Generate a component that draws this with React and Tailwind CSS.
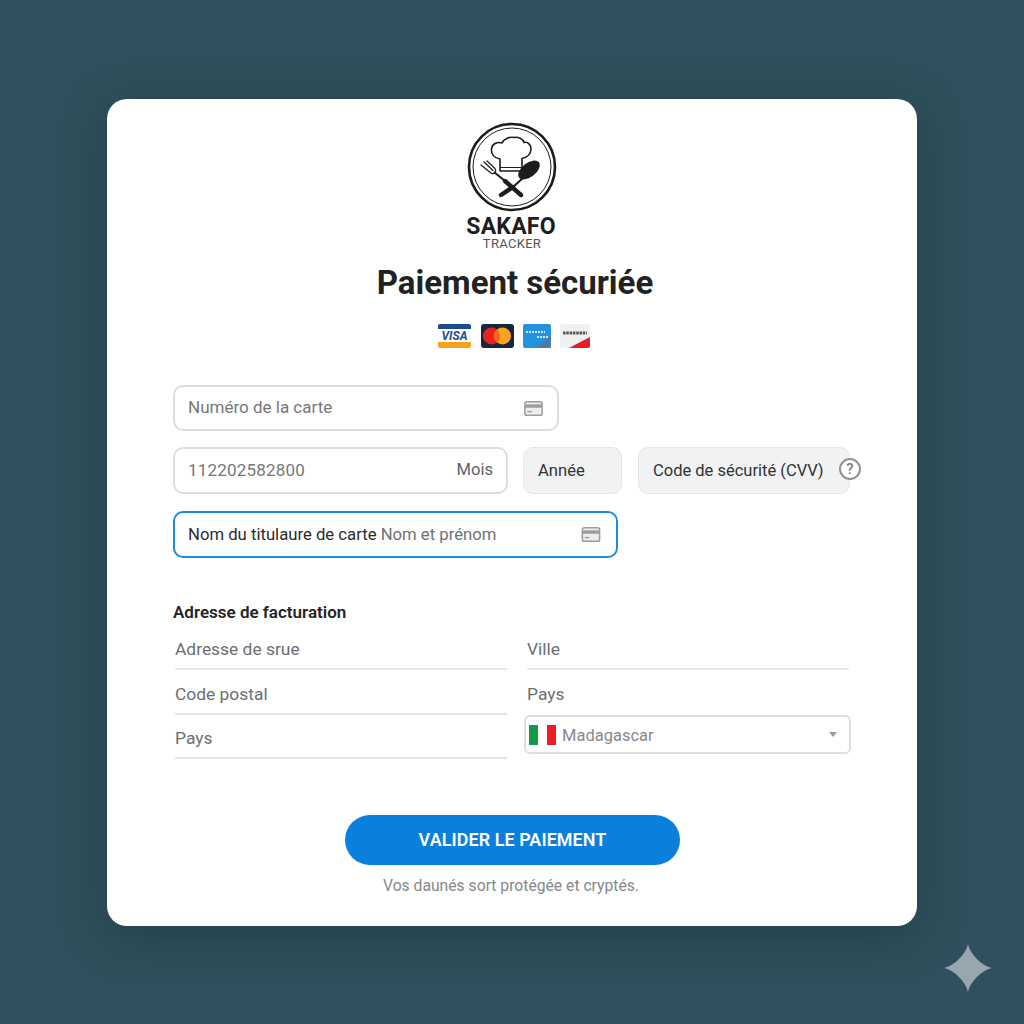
const font = { fontFamily: 'Roboto, "Noto Sans", sans-serif' };

function CardIcon({ className }) {
  return (
    <svg className={className} viewBox="0 0 20 16" fill="none">
      <rect x="0.8" y="0.8" width="18.4" height="14.4" rx="2" fill="#eceded" stroke="#9a9d9f" strokeWidth="1.6" />
      <rect x="1" y="3.6" width="18" height="3.6" fill="#9a9d9f" />
      <rect x="3.4" y="10.6" width="5" height="1.4" fill="#9a9d9f" />
    </svg>
  );
}

function Logo() {
  return (
    <svg className="w-[90px] h-[90px]" viewBox="0 0 90 90" fill="none">
      <circle cx="45" cy="45" r="43" stroke="#1c1c1c" strokeWidth="2.6" />
      <circle cx="45" cy="45" r="39" stroke="#1c1c1c" strokeWidth="1" />
      {/* toque */}
      <path
        d="M33 37 C27 36 24 32 24.500 27 C25 22 30 19.500 35 21 C37 16.500 43 14.500 47 15.500 C51 14.500 56 17 57 20.500 C61 19.500 64 23 64 27 C64 32 60 35.500 55 36.500 L55 49 L33 49 Z"
        fill="#fff"
        stroke="#1c1c1c"
        strokeWidth="1.600"
        strokeLinejoin="round"
      />
      <path d="M33 45.500 H55" stroke="#1c1c1c" strokeWidth="1" />
      {/* fork */}
      <path d="M27 50 L38 59" stroke="#1c1c1c" strokeWidth="2" />
      <path d="M38 59 L54 73" stroke="#1c1c1c" strokeWidth="4.400" strokeLinecap="round" />
      <path
        d="M14 43 L24 51 M17 40 L26 48.500 M20 39 L28 46.500 M24 51 C27 53 30 50 28 46.500"
        stroke="#1c1c1c"
        strokeWidth="1.200"
        strokeLinecap="round"
      />
      {/* spoon */}
      <path d="M57 55 L46 65" stroke="#1c1c1c" strokeWidth="2" />
      <path d="M46 65 L34 73" stroke="#1c1c1c" strokeWidth="4.400" strokeLinecap="round" />
      <ellipse cx="62" cy="48" rx="7" ry="12.500" transform="rotate(52 62 48)" fill="#1c1c1c" />
    </svg>
  );
}

function PaymentBadges() {
  return (
    <div className="flex items-center gap-[9px] mt-[22px] ml-[4px]">
      {/* visa */}
      <div className="w-[33px] h-[24px] mr-[1px] rounded-[2px] overflow-hidden flex flex-col bg-white">
        <div className="h-[5px] bg-[#1d4d8f]" />
        <div className="flex-1 flex items-center justify-center text-[12px] leading-none font-bold italic text-[#1d4d8f]">VISA</div>
        <div className="h-[6px] bg-[#f6a11a]" />
      </div>
      {/* mastercard */}
      <svg className="w-[33px] h-[24px]" viewBox="0 0 33 24">
        <rect width="33" height="24" rx="3" fill="#16263f" />
        <circle cx="10.500" cy="12" r="8.500" fill="#e8221f" />
        <circle cx="21.500" cy="12" r="8.500" fill="#f9a51b" />
        <path d="M16 5.500 A8.500 8.500 0 0 1 16 18.500 A8.500 8.500 0 0 1 16 5.500 Z" fill="#f5641c" />
      </svg>
      {/* amex */}
      <svg className="w-[28px] h-[24px]" viewBox="0 0 28 24">
        <rect width="28" height="24" rx="2" fill="#2393e0" />
        <path d="M28 12 V22 a2 2 0 0 1 -2 2 H12 Z" fill="#4f7aa6" />
        <path d="M3 8 H22 M14 13 H25" stroke="#cfe9fb" strokeWidth="2" strokeDasharray="2 1" />
      </svg>
      {/* discover */}
      <svg className="w-[30px] h-[24px]" viewBox="0 0 30 24">
        <rect width="30" height="24" rx="2" fill="#eef0f2" />
        <path d="M30 13 V22 a2 2 0 0 1 -2 2 H9 Z" fill="#e81c24" />
        <path d="M3 9 H27" stroke="#555" strokeWidth="3" strokeDasharray="2.500 0.800" />
      </svg>
    </div>
  );
}

function UnderlineField({ label, className }) {
  return (
    <div className={`border-b-2 border-[#e4e7e8] flex items-end pb-[8px] text-[17.400px] leading-[22px] text-[#6b6f72] ${className}`}>
      {label}
    </div>
  );
}

export default function App() {
  return (
    <div className="min-h-[1024px] bg-[#2f505c] flex justify-center pt-[99px]" style={font}>
      <div className="w-[810px] h-[827px] bg-white rounded-[20px] shadow-[0_10px_50px_rgba(15,35,45,0.35)] px-[66px] pt-[23px] flex flex-col">
        {/* logo + title */}
        <div className="flex flex-col items-center">
          <Logo />
          <div className="text-[23px] leading-[22px] font-bold text-[#1e1e1e] mt-[4px] ml-[-2px] tracking-[0.2px]">SAKAFO</div>
          <div className="text-[13px] leading-[12px] text-[#555] tracking-[0.3px]">TRACKER</div>
          <h1 className="text-[33px] leading-[38px] font-bold text-[#222] mt-[14px] ml-[6px] whitespace-nowrap">Paiement sécuriée</h1>
          <PaymentBadges />
        </div>

        {/* card number */}
        <div className="mt-[37px] w-[386px] h-[46px] border-2 border-[#dcdedf] rounded-[10px] flex items-center justify-between pl-[13px] pr-[14px] text-[17px] text-[#74787b]">
          <span>Numéro de la carte</span>
          <CardIcon className="w-[19px] h-[15px]" />
        </div>

        {/* expiry + cvv */}
        <div className="mt-[16px] flex items-center">
          <div className="w-[335px] h-[47px] border-2 border-[#dcdedf] rounded-[10px] flex items-center justify-between pl-[13px] pr-[13px] text-[17px] text-[#74787b]">
            <span className="tracking-[0.2px]">112202582800</span>
            <span className="text-[16.600px] text-[#5f6366]">Mois</span>
          </div>
          <div className="ml-[15px] w-[99px] h-[47px] bg-[#f1f2f3] border border-[#e4e5e6] rounded-[10px] flex items-center pt-[2px] pl-[14px] text-[16.600px] text-[#333]">
            Année
          </div>
          <div className="relative ml-[16px] w-[212px] h-[47px] bg-[#f1f2f3] border border-[#e4e5e6] rounded-[10px] flex items-center pt-[2px] pl-[14px] text-[16.500px] text-[#333] whitespace-nowrap">
            Code de sécurité (CVV)
            <div className="absolute left-[200px] top-[10px] w-[22px] h-[22px] rounded-full border-2 border-[#909395] bg-white flex items-center justify-center text-[15px] font-medium text-[#77797b]">?</div>
          </div>
        </div>

        {/* holder */}
        <div className="mt-[17px] w-[445px] h-[47px] border-2 border-[#1f8ae0] rounded-[10px] flex items-center justify-between pl-[13px] pr-[15px] text-[16.700px]">
          <span className="text-[#2c2c2c] whitespace-nowrap">
            Nom du titulaure de carte <span className="text-[#6e7275]">Nom et prénom</span>
          </span>
          <CardIcon className="w-[20px] h-[15px]" />
        </div>

        {/* billing */}
        <h2 className="mt-[43px] text-[17px] leading-[22px] font-semibold text-[#242424]">Adresse de facturation</h2>
        <div className="mt-[1px] flex">
          <div className="w-[332px] ml-[2px] flex flex-col">
            <UnderlineField label="Adresse de srue" className="h-[46px]" />
            <UnderlineField label="Code postal" className="h-[45px]" />
            <UnderlineField label="Pays" className="h-[44px]" />
          </div>
          <div className="ml-[17px] w-[327px] flex flex-col">
            <UnderlineField label="Ville" className="h-[46px] ml-[3px] mr-[2px]" />
            <div className="ml-[3px] h-[45px] flex items-end pb-[10px] text-[17.400px] leading-[22px] text-[#6b6f72]">Pays</div>
            <div className="h-[39px] border-2 border-[#dcdedf] rounded-[6px] flex items-center pl-[3px] pr-[12px] text-[16.500px] text-[#85898b]">
              <span className="w-[27px] h-[20px] flex mr-[6px]">
                <span className="flex-1 bg-[#109a49]" />
                <span className="flex-1 bg-white" />
                <span className="flex-1 bg-[#ec1c2a]" />
              </span>
              <span className="flex-1 pt-[3px]">Madagascar</span>
              <span className="w-0 h-0 border-x-[4.500px] border-x-transparent border-t-[5px] border-t-[#999]" />
            </div>
          </div>
        </div>

        {/* submit */}
        <button className="mt-[56px] self-center ml-[1px] w-[335px] h-[50px] rounded-full bg-[#0a7fdc] text-white text-[17.900px] font-semibold tracking-[0.1px]">
          VALIDER LE PAIEMENT
        </button>
        <p className="mt-[11px] text-center text-[15.700px] leading-[20px] text-[#85898b] ml-[-2px]">Vos daunés sort protégée et cryptés.</p>
      </div>

      {/* corner sparkle, over the background */}
      <svg className="absolute left-[943px] top-[943px] w-[50px] h-[50px]" viewBox="0 0 50 50">
        <path d="M25 1 C27 11 39 23 49 25 C39 27 27 39 25 49 C23 39 11 27 1 25 C11 23 23 11 25 1 Z" fill="#96a7af" />
      </svg>
    </div>
  );
}
